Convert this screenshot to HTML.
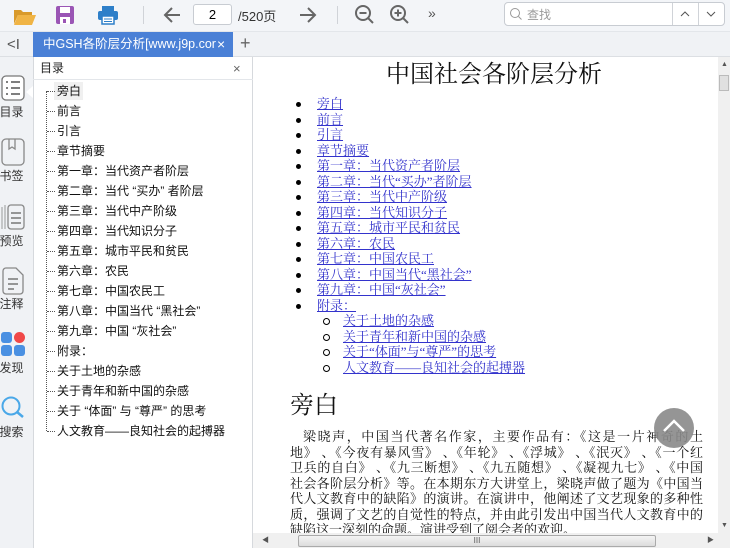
<!DOCTYPE html>
<html><head><meta charset="utf-8"><style>
*{margin:0;padding:0;box-sizing:border-box}
body{width:730px;height:548px;overflow:hidden;background:#f0f2f5;font-family:"Liberation Sans","Noto Sans CJK SC",sans-serif;position:relative}
.abs{position:absolute}
#tb{left:0;top:0;width:730px;height:32px;background:#f3f5f8;border-bottom:1px solid #e3e6ea}
#tabs{left:0;top:32px;width:730px;height:25px;background:#f0f2f5;border-bottom:1px solid #dcdfe3}
#tab{left:33px;top:32px;width:200px;height:25px;background:#4a80d6;color:#fff;font-size:12.5px;line-height:25px;padding-left:10px}
#side{left:33px;top:57px;width:220px;height:491px;background:#fff;border-left:1px solid #d6d9dd;border-right:1px solid #d6d9dd}
#sideh{left:33px;top:57px;width:220px;height:23px;border-bottom:1px solid #e3e6ea;font-size:12px;line-height:23px;padding-left:7px;color:#222}
.ti{position:absolute;left:57px;font-size:12px;color:#111;line-height:14px;white-space:nowrap}
.dot{position:absolute;left:47px;width:8px;border-top:1px dotted #555}
#main{left:253px;top:57px;width:465px;height:476px;background:#fff;font-family:"Liberation Serif","Noto Serif CJK SC",serif;overflow:hidden}
a{color:#3333cc;text-decoration:underline}
.li{position:absolute;left:64px;font-size:13px;line-height:15px;white-space:nowrap}
.li:before{content:"";position:absolute;left:-21px;top:6px;width:5px;height:5px;border-radius:50%;background:#000}
.li2{position:absolute;left:90px;font-size:13px;line-height:15px;white-space:nowrap}
.li2:before{content:"";position:absolute;left:-20px;top:5px;width:5px;height:5px;border-radius:50%;border:1px solid #000}
.lbl{position:absolute;left:0;width:33px;text-align:center;font-size:12px;color:#333}
.pl{position:absolute;left:37px;width:413px;font-size:13px;line-height:15.5px;color:#111;text-align:justify;text-align-last:justify;white-space:nowrap}
</style></head><body>
<div id="tb" class="abs"></div>
<svg class="abs" style="left:12px;top:5px" width="26" height="22"><path d="M2 5h7l2 2h9v3H6L2 19z" fill="#d99a2b"/><path d="M6 10h18l-4 10H2z" fill="#f0b445"/></svg>
<svg class="abs" style="left:55px;top:5px" width="20" height="20"><rect x="1" y="1" width="18" height="18" rx="2" fill="#9a55b5"/><rect x="5" y="2" width="10" height="6" fill="#fff"/><rect x="5" y="12" width="10" height="7" fill="#fff"/><rect x="8" y="14" width="3" height="4" fill="#9a55b5"/></svg>
<svg class="abs" style="left:97px;top:5px" width="22" height="20"><rect x="5" y="1" width="12" height="5" fill="#2d7fc9"/><rect x="1" y="6" width="20" height="9" rx="2" fill="#2d7fc9"/><rect x="5" y="11" width="12" height="8" fill="#fff" stroke="#2d7fc9" stroke-width="1.5"/><line x1="7" y1="14" x2="15" y2="14" stroke="#2d7fc9"/><line x1="7" y1="16.5" x2="15" y2="16.5" stroke="#2d7fc9"/></svg>
<div class="abs" style="left:143px;top:6px;width:1px;height:18px;background:#d0d3d8"></div>
<svg class="abs" style="left:162px;top:5px" width="20" height="20"><path d="M18 10H3M10 3L3 10l7 7" stroke="#666" stroke-width="2" fill="none"/></svg>
<div class="abs" style="left:193px;top:4px;width:39px;height:21px;border:1px solid #c8ccd2;border-radius:3px;background:#fff;font-size:13px;text-align:center;line-height:19px">2</div>
<div class="abs" style="left:238px;top:6px;font-size:13px;color:#333">/520页</div>
<svg class="abs" style="left:298px;top:5px" width="20" height="20"><path d="M2 10h15M10 3l7 7-7 7" stroke="#666" stroke-width="2" fill="none"/></svg>
<div class="abs" style="left:337px;top:6px;width:1px;height:18px;background:#d0d3d8"></div>
<svg class="abs" style="left:354px;top:4px" width="22" height="22"><circle cx="9" cy="9" r="7" stroke="#666" stroke-width="2" fill="none"/><path d="M5.5 9h7M14 14l5 5" stroke="#666" stroke-width="2"/></svg>
<svg class="abs" style="left:389px;top:4px" width="22" height="22"><circle cx="9" cy="9" r="7" stroke="#666" stroke-width="2" fill="none"/><path d="M5.5 9h7M9 5.5v7M14 14l5 5" stroke="#666" stroke-width="2"/></svg>
<div class="abs" style="left:428px;top:5px;font-size:14px;color:#555">»</div>
<div class="abs" style="left:504px;top:2px;width:221px;height:24px;border:1px solid #c8ccd2;border-radius:4px;background:#fff"></div>
<svg class="abs" style="left:509px;top:7px" width="14" height="14"><circle cx="6" cy="6" r="4.5" stroke="#999" fill="none"/><path d="M9.5 9.5l3 3" stroke="#999"/></svg>
<div class="abs" style="left:527px;top:6px;font-size:12px;color:#999">查找</div>
<div class="abs" style="left:672px;top:3px;width:1px;height:22px;background:#d0d3d8"></div>
<div class="abs" style="left:698px;top:3px;width:1px;height:22px;background:#d0d3d8"></div>
<svg class="abs" style="left:680px;top:10px" width="10" height="8"><path d="M1 6l4-4 4 4" stroke="#555" fill="none"/></svg>
<svg class="abs" style="left:706px;top:10px" width="10" height="8"><path d="M1 2l4 4 4-4" stroke="#555" fill="none"/></svg>

<div id="tabs" class="abs"></div>
<div class="abs" style="left:7px;top:36px;font-size:15px;color:#555">&lt;I</div>
<div id="tab" class="abs">中GSH各阶层分析[www.j9p.cor<span style="position:absolute;left:184px;top:0;font-size:14px">×</span></div>
<div class="abs" style="left:240px;top:33px;font-size:18px;color:#666">+</div>

<svg class="abs" style="left:1px;top:75px" width="24" height="26"><rect x="1" y="1" width="22" height="24" rx="4" stroke="#777" fill="#fff" stroke-width="1.3"/><path d="M5 7h2M10 7h9M5 13h2M10 13h9M5 19h2M10 19h9" stroke="#555" stroke-width="1.6"/></svg>
<div class="lbl" style="top:103px;left:-5px">目录</div>
<svg class="abs" style="left:1px;top:138px" width="24" height="28"><rect x="1" y="1" width="22" height="26" rx="4" stroke="#888" fill="none" stroke-width="1.3"/><path d="M8 1v10l3-2 3 2V1" stroke="#888" fill="none" stroke-width="1.3"/></svg>
<div class="lbl" style="top:167px;left:-5px">书签</div>
<svg class="abs" style="left:0;top:203px" width="26" height="28"><path d="M2 4v22M5 2v24" stroke="#999"/><rect x="8" y="2" width="16" height="24" rx="3" stroke="#888" fill="none" stroke-width="1.3"/><path d="M11 10h10M11 15h10M11 20h10" stroke="#777" stroke-width="1.4"/></svg>
<div class="lbl" style="top:232px;left:-5px">预览</div>
<svg class="abs" style="left:1px;top:267px" width="24" height="28"><path d="M2 4a3 3 0 013-3h10l7 7v16a3 3 0 01-3 3H5a3 3 0 01-3-3z" stroke="#888" fill="none" stroke-width="1.3"/><path d="M7 12h10M7 17h10M7 22h6" stroke="#777" stroke-width="1.4"/></svg>
<div class="lbl" style="top:295px;left:-5px">注释</div>
<div class="abs" style="left:1px;top:332px;width:11px;height:11px;border-radius:3px;background:#4a90e2"></div>
<div class="abs" style="left:14px;top:332px;width:11px;height:11px;border-radius:50%;background:#f04848"></div>
<div class="abs" style="left:1px;top:345px;width:11px;height:11px;border-radius:3px;background:#4a90e2"></div>
<div class="abs" style="left:14px;top:345px;width:11px;height:11px;border-radius:3px;background:#4a90e2"></div>
<div class="lbl" style="top:359px;left:-5px">发现</div>
<svg class="abs" style="left:0;top:395px" width="26" height="26"><circle cx="11" cy="11" r="8.5" stroke="#4aa8e8" stroke-width="2" fill="none"/><path d="M17 17l6 5" stroke="#4aa8e8" stroke-width="2.5"/></svg>
<div class="lbl" style="top:423px;left:-5px">搜索</div>

<div id="side" class="abs"></div>
<div id="sideh" class="abs">目录<span style="position:absolute;left:200px;font-size:13px;color:#666">×</span></div>
<div class="abs" style="left:54px;top:82px;width:29px;height:18px;background:#f0f0f0"></div>
<div class="abs" style="left:46px;top:91px;height:340px;border-left:1px dotted #555"></div>
<div class="abs" style="left:26px;top:86px;width:0;height:0;border-top:6px solid transparent;border-bottom:6px solid transparent;border-right:7px solid #fff"></div>
<div class="dot" style="top:91px"></div><div class="ti" style="top:84px">旁白</div>
<div class="dot" style="top:111px"></div><div class="ti" style="top:104px">前言</div>
<div class="dot" style="top:131px"></div><div class="ti" style="top:124px">引言</div>
<div class="dot" style="top:151px"></div><div class="ti" style="top:144px">章节摘要</div>
<div class="dot" style="top:171px"></div><div class="ti" style="top:164px">第一章：当代资产者阶层</div>
<div class="dot" style="top:191px"></div><div class="ti" style="top:184px">第二章：当代 “买办” 者阶层</div>
<div class="dot" style="top:211px"></div><div class="ti" style="top:204px">第三章：当代中产阶级</div>
<div class="dot" style="top:231px"></div><div class="ti" style="top:224px">第四章：当代知识分子</div>
<div class="dot" style="top:251px"></div><div class="ti" style="top:244px">第五章：城市平民和贫民</div>
<div class="dot" style="top:271px"></div><div class="ti" style="top:264px">第六章：农民</div>
<div class="dot" style="top:291px"></div><div class="ti" style="top:284px">第七章：中国农民工</div>
<div class="dot" style="top:311px"></div><div class="ti" style="top:304px">第八章：中国当代 “黑社会”</div>
<div class="dot" style="top:331px"></div><div class="ti" style="top:324px">第九章：中国 “灰社会”</div>
<div class="dot" style="top:351px"></div><div class="ti" style="top:344px">附录：</div>
<div class="dot" style="top:371px"></div><div class="ti" style="top:364px">关于土地的杂感</div>
<div class="dot" style="top:391px"></div><div class="ti" style="top:384px">关于青年和新中国的杂感</div>
<div class="dot" style="top:411px"></div><div class="ti" style="top:404px">关于 “体面” 与 “尊严” 的思考</div>
<div class="dot" style="top:431px"></div><div class="ti" style="top:424px">人文教育——良知社会的起搏器</div>

<div id="main" class="abs">
<div class="abs" style="left:133px;top:-3px;font-size:24px;color:#111;white-space:nowrap">中国社会各阶层分析</div>
<div class="li" style="top:39px"><a>旁白</a></div>
<div class="li" style="top:54.5px"><a>前言</a></div>
<div class="li" style="top:70px"><a>引言</a></div>
<div class="li" style="top:85.5px"><a>章节摘要</a></div>
<div class="li" style="top:101px"><a>第一章：当代资产者阶层</a></div>
<div class="li" style="top:116.5px"><a>第二章：当代“买办”者阶层</a></div>
<div class="li" style="top:132px"><a>第三章：当代中产阶级</a></div>
<div class="li" style="top:147.5px"><a>第四章：当代知识分子</a></div>
<div class="li" style="top:163px"><a>第五章：城市平民和贫民</a></div>
<div class="li" style="top:178.5px"><a>第六章：农民</a></div>
<div class="li" style="top:194px"><a>第七章：中国农民工</a></div>
<div class="li" style="top:209.5px"><a>第八章：中国当代“黑社会”</a></div>
<div class="li" style="top:225px"><a>第九章：中国“灰社会”</a></div>
<div class="li" style="top:240.5px"><a>附录：</a></div>
<div class="li2" style="top:256px"><a>关于土地的杂感</a></div>
<div class="li2" style="top:271.5px"><a>关于青年和新中国的杂感</a></div>
<div class="li2" style="top:287px"><a>关于“体面”与“尊严”的思考</a></div>
<div class="li2" style="top:302.5px"><a>人文教育——良知社会的起搏器</a></div>
<div class="abs" style="left:37px;top:328px;font-size:24px;color:#111">旁白</div>
<div class="pl" style="top:372px;left:50px;width:400px">梁晓声，中国当代著名作家，主要作品有：《这是一片神奇的土</div>
<div class="pl" style="top:387.5px">地》 、《今夜有暴风雪》 、《年轮》 、《浮城》 、《泯灭》 、《一个红</div>
<div class="pl" style="top:403px">卫兵的自白》 、《九三断想》 、《九五随想》 、《凝视九七》 、《中国</div>
<div class="pl" style="top:418.5px">社会各阶层分析》等。在本期东方大讲堂上，梁晓声做了题为《中国当</div>
<div class="pl" style="top:434px">代人文教育中的缺陷》的演讲。在演讲中，他阐述了文艺现象的多种性</div>
<div class="pl" style="top:449.5px">质，强调了文艺的自觉性的特点，并由此引发出中国当代人文教育中的</div>
<div class="pl" style="top:465px;text-align-last:left">缺陷这一深刻的命题。演讲受到了阅会者的欢迎。</div>
</div>
<div class="abs" style="left:654px;top:408px;width:40px;height:40px;border-radius:50%;background:#8a8a8a;opacity:.9"></div>
<svg class="abs" style="left:662px;top:418px" width="24" height="16"><path d="M2 13l10-10 10 10" stroke="#fff" stroke-width="2.5" fill="none"/></svg>
<div class="abs" style="left:718px;top:57px;width:12px;height:476px;background:#f0f0f0"></div>
<div class="abs" style="left:719px;top:75px;width:10px;height:16px;background:#e0e0e0;border:1px solid #bbb"></div>
<div class="abs" style="left:721px;top:61px;font-size:7px;color:#555">▲</div>
<div class="abs" style="left:721px;top:522px;font-size:7px;color:#555">▼</div>
<div class="abs" style="left:253px;top:533px;width:477px;height:15px;background:#f0f0f0"></div>
<div class="abs" style="left:298px;top:535px;width:358px;height:12px;background:linear-gradient(#f4f4f4,#dcdcdc);border:1px solid #aaa;border-radius:2px;font-size:8px;text-align:center;line-height:10px;color:#555">III</div>
<div class="abs" style="left:262px;top:535px;font-size:7px;color:#555">◀</div>
<div class="abs" style="left:707px;top:535px;font-size:7px;color:#555">▶</div>
</body></html>
